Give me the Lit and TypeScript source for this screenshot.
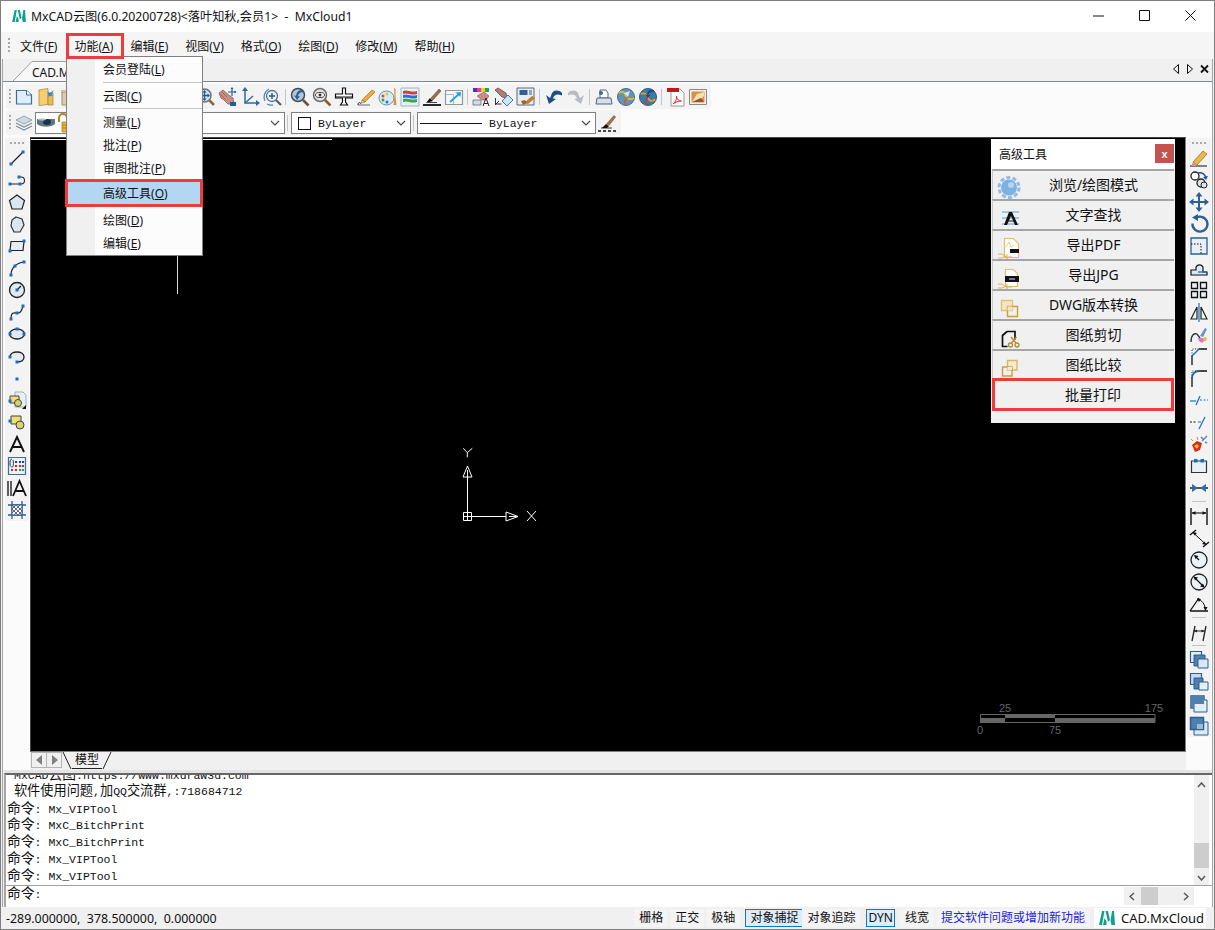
import {LitElement, html, css, svg} from 'lit';
import {customElement} from 'lit/decorators.js';

const BLUE = '#1a6fc4';
const NAVY = '#2d5f94';
const node = (x: number, y: number) => svg`<rect x=${x - 1.5} y=${y - 1.5} width="3" height="3" fill=${BLUE}/>`;

// toolbar icons, all drawn on a 20x20 box (the panel ones on 30x30)
const ICONS: Record<string, unknown> = {
    // top toolbar
    newdoc: svg`<path d="M2.5 3.5h10l5 4.500v9h-15z" fill="#dfeefa" stroke="#3c6f9f" stroke-width="1.200"/><path d="M12.500 3.500v4.500h5" fill="#fff" stroke="#3c6f9f"/>`,
    open: svg`<path d="M3 3l9 -1.500v16l-9 1z" fill="#f3cf73" stroke="#b08a35" stroke-width=".8"/><path d="M12 6h5v12h-5z" fill="#e8bb55" stroke="#b08a35" stroke-width=".8"/><path d="M18 3l-4 3 -2.500 -1.500 1 5 4.500 -1 -1.500 -1z" fill="#2b8ad8"/>`,
    trash: svg`<path d="M4 5h8v13h-8z" fill="#d8cfae" stroke="#9d9468"/><path d="M3 3h11v2h-11z" fill="#cfc497"/>`,
    zoomPan: svg`<circle cx="8.500" cy="8.500" r="6.500" fill="#d8e4ee" stroke="#68747f" stroke-width="1.500"/><path d="M13 13l5 5" stroke="#8a6a45" stroke-width="2.500"/><path d="M8.500 4.500v8M4.500 8.500h8" stroke="#1f5a92" stroke-width="1.300"/><path d="M8.500 3l-2 2.500h4zM8.500 14l-2 -2.500h4zM3 8.500l2.500 -2v4zM14 8.500l-2.500 -2v4z" fill="#1f5a92"/>`,
    hand: svg`<path d="M1 6l4 -3 7 6 3 2 1 6h-6l-4 -4 -3 -2z" fill="#c58f86" stroke="#8e5a55" stroke-width=".8"/><path d="M4 5l5 5M2.500 7.500l5 5" stroke="#8e5a55" stroke-width=".8"/><path d="M14 1v8M10 5h8" stroke="#245f98" stroke-width="1.200"/><path d="M14 0l-1.500 2h3zM18.500 5l-2 -1.500v3z" fill="#245f98"/><path d="M12 15h6v4h-6z" fill="#245f98"/>`,
    axes: svg`<path d="M5 2v14h13" fill="none" stroke="#2a6aa8" stroke-width="1.500"/><path d="M5 16l8 -7" stroke="#2a6aa8" stroke-width="1.300"/><path d="M5 0l-3 4h6zM20 16l-4 -3v6z" fill="#2a6aa8"/>`,
    zoomRound: svg`<circle cx="10" cy="9" r="5.500" fill="#eaf2f8" stroke="#58708a" stroke-width="1.300"/><path d="M10 6v6M7 9h6" stroke="#1f5a92" stroke-width="1.400"/><path d="M14 13l5 5" stroke="#58606a" stroke-width="2.200"/><path d="M3 14a9 9 0 0 1 4 -12" fill="none" stroke="#4c8ac0" stroke-width="1.300"/><path d="M5 17a9 9 0 0 0 6 1" fill="none" stroke="#4c8ac0" stroke-width="1.300"/>`,
    zoomBack: svg`<circle cx="8" cy="8" r="6.500" fill="#b7c6d4" stroke="#3d4e60" stroke-width="1.500"/><path d="M13 13l5.500 5.500" stroke="#75502f" stroke-width="2.500"/><path d="M13 3a6 6 0 0 0 -7 6l-2 -1 3 5 3 -4 -2 .5a4 4 0 0 1 5 -4z" fill="#24609c"/>`,
    zoomEye: svg`<circle cx="8" cy="8" r="6.500" fill="#e2e2e2" stroke="#6d6d6d" stroke-width="1.500"/><ellipse cx="8" cy="8" rx="4.500" ry="2.500" fill="#fff" stroke="#444"/><circle cx="8" cy="8" r="1.500" fill="#333"/><path d="M13 13l5.500 5.500" stroke="#8a5a35" stroke-width="2.500"/>`,
    plane: svg`<path d="M8.500 1h3v6h7v4h-7v4l2 3h-7l2 -3v-4h-7v-4h7z" fill="#fff" stroke="#111" stroke-width="1.200"/><path d="M1 10h18" stroke="#111"/>`,
    pen: svg`<path d="M2 18h12" stroke="#666"/><path d="M2 18c0 -3 2 -3 3 -1" fill="none" stroke="#222"/><path d="M6 13l10 -10 3 2 -10 10z" fill="#eead3b" stroke="#a86f1d" stroke-width=".7"/><path d="M6 13l-1 3 4 -1z" fill="#f8e2b5" stroke="#555" stroke-width=".5"/>`,
    palette: svg`<ellipse cx="8.500" cy="11" rx="7.500" ry="7" fill="#dbe9f2" stroke="#5d93bd"/><circle cx="5" cy="9" r="1.500" fill="#e0483c"/><circle cx="9" cy="7" r="1.500" fill="#f0c030"/><circle cx="5" cy="13" r="1.500" fill="#35a050"/><circle cx="9" cy="15" r="1.500" fill="#3070d0"/><path d="M16 1l1.500 1v7l1 9h-3l1 -9z" fill="#e78a2a"/>`,
    stack: svg`<path d="M1 1h18v18h-18z" fill="#e9f0f5" stroke="#9fb3c2"/><path d="M3 4c4 -2 8 2 14 0v3c-6 2 -10 -2 -14 0z" fill="#d83b3b"/><path d="M3 8c4 -2 8 2 14 0v3c-6 2 -10 -2 -14 0z" fill="#2f6fd0"/><path d="M3 12c4 -2 8 2 14 0v3c-6 2 -10 -2 -14 0z" fill="#38a44c"/>`,
    brush: svg`<path d="M1 18h18" stroke="#111" stroke-width="1.800"/><path d="M4 16l4 -5 3 3z" fill="#111"/><path d="M9 11l8 -9 2 2 -8 9z" fill="#9b7048" stroke="#5e3e20" stroke-width=".5"/><path d="M5 15.500h10" stroke="#444"/>`,
    resize: svg`<path d="M1.500 3.500h17v14h-17z" fill="#f4f7fa" stroke="#8f969c" stroke-width="1.200"/><path d="M1.500 7.500h8v10" fill="none" stroke="#b0b6bb"/><path d="M6 15l9 -8" stroke="#28a0e0" stroke-width="1.800"/><path d="M17 5l-5.500 .5 5 4.500z" fill="#28a0e0"/>`,
    match: svg`<path d="M1 1h16v4h-16z" fill="#e83a9a"/><path d="M1 1h4v4h-4z" fill="#5030c0"/><path d="M9 1h4v4h-4z" fill="#f0d020"/><path d="M13 1h4v4h-4z" fill="#20a050"/><path d="M5 9l7 -4 5 4 -3 4h-4z" fill="#cc8a80" stroke="#8e5a55" stroke-width=".6"/><path d="M1 13h8v5h-8z" fill="#d0dbe4" stroke="#62707e" stroke-width=".8"/><path d="M11 19l3 -8 3 8M12 16.500h4" fill="none" stroke="#222"/>`,
    hand2: svg`<path d="M1 3l3 -2 8 5 1 5 -5 -1z" fill="#a98078" stroke="#6e4a46" stroke-width=".8"/><path d="M8 14l6 -6 5 5 -6 6z" fill="#cfe4f5" stroke="#3a78b0"/><path d="M1.500 11v6h6" fill="none" stroke="#333"/><path d="M1 18l4 -4" stroke="#333"/>`,
    save: svg`<path d="M1 1h17v17h-17z" fill="#e6edf2" stroke="#5c6a75"/><path d="M3.500 3h8v5h-8z" fill="#305f96"/><path d="M13 3h3v5h-3z" fill="#8fa7bc"/><path d="M8 16l8 -7 3 2 -7 6z" fill="#c67a30"/><path d="M5 14l4 -1 2 3 -4 2z" fill="#a85f20"/>`,
    undo: svg`<path d="M18 6c-4 -4 -10 -3 -11 3l-1 2 -4 -3 3 9 7 -5 -3 -.5c1 -4 5 -5 9 -3z" fill="#1c4d84"/>`,
    redo: svg`<path d="M2 6c4 -4 10 -3 11 3l1 2 4 -3 -3 9 -7 -5 3 -.5c-1 -4 -5 -5 -9 -3z" fill="#b9bcbe"/>`,
    print: svg`<path d="M6 3h6l2 3v5h-8z" fill="#fff" stroke="#50647c"/><path d="M3 11h14l1 6h-16z" fill="#d6deea" stroke="#50647c"/><circle cx="7" cy="6" r="2" fill="#50647c"/>`,
    globe1: svg`<circle cx="10" cy="10" r="8.500" fill="#5d94b8" stroke="#4a6a80"/><path d="M3 6c4 -3 6 0 7 3s5 4 8 2" fill="none" stroke="#e8b040" stroke-width="2"/><path d="M10 18c-2 -3 -1 -6 2 -8" fill="none" stroke="#d85a30" stroke-width="1.500"/><path d="M14 4l-6 2 4 4z" fill="#dbe6ee"/>`,
    globe2: svg`<circle cx="10" cy="10" r="8.500" fill="#3d7aa8" stroke="#3a5a70"/><path d="M3 7c4 -2 6 1 7 4s5 4 7 1" fill="none" stroke="#e0a030" stroke-width="1.800"/><path d="M8 18c-1 -3 0 -6 2 -8" fill="none" stroke="#c83a30" stroke-width="1.500"/><path d="M16 3c-4 -1 -7 1 -7 5l-2 -1 2.500 4 3 -3 -2 0c0 -2 2 -3 5 -3z" fill="#1c4d84"/>`,
    pdf: svg`<path d="M5 2h9l4 4v13h-13z" fill="#fff" stroke="#9a9a9a"/><path d="M1 1h12v4h-12z" fill="#c4151c"/><path d="M7 17c3 -2 4 -6 3.500 -8 0 3 2 5 5 5 -3 0 -6 1 -8.500 3z" fill="none" stroke="#e0302a"/>`,
    img: svg`<path d="M1.500 2.500h17v15h-17z" fill="#f5f1e6" stroke="#8a8a8a"/><path d="M3.500 4.500h13v11h-13z" fill="#d89050"/><path d="M4 15l5 -8 7 -2v4l-6 6z" fill="#ece2b5"/><path d="M4 15l9 -4 3 4z" fill="#9e4e25"/>`,
    layers: svg`<path d="M10 3l8 4 -8 4 -8 -4z" fill="#cfdbe4" stroke="#7d8f9c" stroke-width=".8"/><path d="M2 10l8 4 8 -4M2 13l8 4 8 -4" fill="none" stroke="#7d8f9c" stroke-width="1.300"/>`,
    eye: svg`<path d="M1 6h18v5c-3 3 -13 4 -18 0z" fill="#5e7488"/><ellipse cx="11" cy="9" rx="4" ry="3" fill="#1c3348"/><ellipse cx="6" cy="6.500" rx="4" ry="1" fill="#a9c0d2"/>`,
    lock: svg`<path d="M3 9v-4a4 4 0 0 1 8 0v2" fill="none" stroke="#b57f1c" stroke-width="2"/><path d="M6 9h13v10h-13z" fill="#edb23c" stroke="#a87418" stroke-width=".7"/><path d="M6 12h13M6 15h13" stroke="#a87418" stroke-width=".8"/>`,
    weight: svg`<path d="M1 18h3M6 18h3M11 18h3M16 18h3" stroke="#111" stroke-width="1.500"/><path d="M4 15h11" stroke="#333"/><path d="M5 15l4 -4 3 2 -2 2z" fill="#111"/><path d="M9 11l8 -9 2 2 -7 9z" fill="#9b7048"/>`,

    // left toolbar
    line: svg`<path d="M4 16l12 -12" stroke="#222" stroke-width="1.200"/>${node(4, 16)}${node(16, 4)}`,
    polyline: svg`<path d="M3 14h11a3.500 3.500 0 0 0 0 -7h-2" fill="none" stroke="#222" stroke-width="1.100"/>${node(3, 14)}${node(13, 14)}${node(12, 7)}`,
    pentagon: svg`<path d="M10 3l7.500 5.500 -2.500 8.500h-10l-2.500 -8.500z" fill="#dbe6ef" stroke="#222" stroke-width="1.200"/>`,
    hexagon: svg`<path d="M9 3l6 2 2 6 -4 7h-6l-3 -6 1 -6z" fill="#dbe6ef" stroke="#333" stroke-width="1.200"/>`,
    rect: svg`<path d="M4 5.500h13l-1 9h-13z" fill="#e5edf4" stroke="#222" stroke-width="1.200"/>${node(3, 15)}${node(17, 5)}`,
    arc: svg`<path d="M4 17c0 -7 5 -12 13 -13" fill="none" stroke="#222" stroke-width="1.200"/>${node(4, 17)}${node(8, 8)}${node(17, 4)}`,
    circle: svg`<circle cx="10" cy="10" r="7.500" fill="#e2e9ef" stroke="#222" stroke-width="1.300"/><path d="M10 10l4 -4" stroke="#222" stroke-width="1.200"/>${node(10, 10)}`,
    spline: svg`<path d="M4 17c0 -8 4 -6 7 -6s4 -3 5 -7" fill="none" stroke="#222" stroke-width="1.200"/>${node(4, 17)}${node(16, 4)}${node(10, 11)}`,
    ellipse: svg`<ellipse cx="10" cy="10" rx="7.500" ry="5" fill="#dfe8f0" stroke="#222" stroke-width="1.300"/>${node(3, 10)}${node(17, 10)}${node(10, 5)}`,
    earc: svg`<path d="M10 16c5 0 7 -2 7 -5s-3 -5 -7 -5 -7 2 -7 5" fill="#e4eaf0" stroke="#222" stroke-width="1.300"/>${node(3, 11)}${node(10, 16)}`,
    point: svg`${node(10, 11)}`,
    insert: svg`<path d="M8 2h8l3 3v12h-11z" fill="#e8f0f6" stroke="#9bb0c0"/><path d="M3 6h9v7h-9z" fill="#f0e070" stroke="#445"/><circle cx="11" cy="13" r="3.500" fill="#d8d46a" stroke="#445"/><path d="M15 19l4 -4v4z" fill="#111"/>${node(3, 11)}`,
    block: svg`<path d="M4 4h10v8h-10z" fill="#f0e070" stroke="#445"/><circle cx="13" cy="13" r="4" fill="#d8d46a" stroke="#445"/>${node(3, 9)}`,
    textA: svg`<path d="M3 18L10 3l7 15M5.500 13h9" fill="none" stroke="#111" stroke-width="1.900"/>`,
    table: svg`<path d="M1.500 1.500h17v17h-17z" fill="#eef2f6" stroke="#3a6d9d" stroke-width="1.200"/><path d="M8 5h2v2h-2zM12 5h2v2h-2zM15 5h2v2h-2z" fill="#24457a"/><path d="M8 9h2v2h-2zM12 9h2v2h-2zM15 9h2v2h-2z" fill="#d02828"/><path d="M4 13h2v2h-2zM8 13h2v2h-2z" fill="#d02828"/><path d="M12 13h2v2h-2zM15 13h2v2h-2z" fill="#20a050"/><path d="M5 3c-2 0 -2 3 -2 5s1 3 2 3 2 -1 1 -7" fill="none" stroke="#333"/>`,
    mtext: svg`<path d="M1 3v15M4 3v15" stroke="#111" stroke-width="1.300"/><path d="M6 18l6.500 -15 6.500 15M8.500 13h8" fill="none" stroke="#111" stroke-width="1.800"/>`,
    hatch: svg`<path d="M1 5h18M1 15h18M5 1v18M15 1v18" stroke="#2d5f94" stroke-width="1.300"/><path d="M5 5h10v10h-10z" fill="#fff"/><path d="M5 9l4 -4M5 13l8 -8M7 15l8 -8M11 15l4 -4M9 5l6 6M5 5l10 10M5 9l6 6" stroke="#3a4a5a" stroke-width=".8"/><path d="M5 5h10v10h-10z" fill="none" stroke="#2d5f94"/>`,

    // right toolbar
    erase: svg`<path d="M1 18h17" stroke="#333" stroke-width="1.200"/><path d="M4 14l10 -11 4 3 -10 11z" fill="#e8b84a" stroke="#8a6a20" stroke-width=".7"/><path d="M4 14l4 3 -2 1h-4z" fill="#e09090"/>`,
    copy: svg`<circle cx="6" cy="6" r="4" fill="#fff" stroke="#222" stroke-width="1.300"/><circle cx="12" cy="13" r="4" fill="#dbe5ee" stroke="#222" stroke-width="1.300"/><circle cx="15" cy="15" r="3" fill="#dbe5ee" stroke="#222"/><path d="M9 3c4 -1 7 1 8 5" fill="none" stroke="#1f4f88" stroke-width="1.500"/><path d="M19 6l-2 4 -3 -3z" fill="#1f4f88"/>`,
    move: svg`<path d="M10 2v16M2 10h16" stroke="${NAVY}" stroke-width="2"/><path d="M10 0l-3.500 4.500h7zM10 20l-3.500 -4.500h7zM0 10l4.500 -3.500v7zM20 10l-4.500 -3.500v7z" fill="${NAVY}"/>`,
    rotate: svg`<path d="M6 4.500a7.500 7.500 0 1 1 -2.500 5" fill="none" stroke="${NAVY}" stroke-width="2.300"/><path d="M9 0v7l-6 -3.500z" fill="${NAVY}"/>`,
    scale: svg`<path d="M2 2h16v16h-16z" fill="#e8f0f7" stroke="${NAVY}" stroke-width="1.300"/><path d="M2 8h10v10" fill="none" stroke="#111" stroke-dasharray="1.500 1.500"/>`,
    stretch: svg`<path d="M2 17v-5h5v-3a4 4 0 0 1 7 0v5h4v3z" fill="#dce8f2" stroke="#111" stroke-width="1.200"/><path d="M9 14h9" stroke="#1f6fbf" stroke-width="1.300"/>`,
    array: svg`<path d="M2.500 2.500h6v6h-6zM11.500 2.500h6v6h-6zM2.500 11.500h6v6h-6zM11.500 11.500h6v6h-6z" fill="#eaf0f5" stroke="#111" stroke-width="1.300"/>`,
    mirror: svg`<path d="M2 17l6 -12v12zM18 17l-6 -12v12z" fill="#eef3f7" stroke="#222" stroke-width="1.200"/><path d="M10 1v19" stroke="#1f6fbf" stroke-width="1.200"/>`,
    trim: svg`<path d="M2 18c0 -7 3 -9 6 -8l3 4" fill="none" stroke="#333" stroke-width="1.300"/><path d="M11 12l5 -8 2 1 -4 8z" fill="#6a90d0"/><path d="M9 14h5l2 2 -3 3 -3 -2z" fill="#e070d0"/><circle cx="16" cy="15" r="2" fill="#e8c040"/>`,
    chamfer: svg`<path d="M3 19v-9M10 3h8" stroke="#111" stroke-width="1.300"/><path d="M3 10l7 -7" stroke="#1f6fbf" stroke-width="1.500"/><path d="M3 10v-7h7" fill="none" stroke="#222" stroke-dasharray="1 1.500"/>`,
    fillet: svg`<path d="M3 19v-9M10 3h8" stroke="#111" stroke-width="1.300"/><path d="M3 10c0 -4 3 -7 7 -7" fill="none" stroke="#1f6fbf" stroke-width="1.800"/><path d="M3 10v-7h7" fill="none" stroke="#222" stroke-dasharray="1 1.500"/>`,
    brk1: svg`<path d="M1 11h6" stroke="#1f6fbf" stroke-width="1.200"/><path d="M7 15l4 -9" stroke="#1f6fbf" stroke-width="1.300"/><path d="M11 10h8" stroke="#1f6fbf" stroke-dasharray="2 1.500"/>`,
    brk2: svg`<path d="M1 10h7" stroke="#111" stroke-dasharray="2 1.500"/><path d="M9 10h3" stroke="#1f6fbf"/><path d="M10 17l6 -12" stroke="#1f6fbf" stroke-width="1.300"/>`,
    explode: svg`<path d="M3 11l5 -4 5 2 -2 7 -5 2z" fill="#d82a20"/><path d="M5 12l3 -2 2 2 -2 3z" fill="#f0c020"/><path d="M13 7l5 -5M12 3l2 2M16 8l2 1" stroke="#5a88b8" stroke-width="1.500"/><path d="M2 5l2 2M8 3l1 3" stroke="#e88a20"/>`,
    join: svg`<path d="M2.500 5v11.500h15v-11.500h-15z" fill="#eaf0f5" stroke="#333" stroke-width="1.200"/><path d="M5 3h3.500v3.500h-3.500zM11.500 3h3.500v3.500h-3.500z" fill="${BLUE}"/>`,
    merge: svg`<path d="M1 10h18" stroke="#222" stroke-width="1.500"/><path d="M3 6l6 4 -6 4zM17 6l-6 4 6 4z" fill="#2d6da8"/>`,
    dimLin: svg`<path d="M2 2v17M18 2v17" stroke="#111" stroke-width="1.400"/><path d="M3 7h14" stroke="#111" stroke-width="1.100"/><path d="M2.500 7l4 -1.800v3.600zM17.500 7l-4 -1.800v3.600z" fill="#111"/>`,
    dimAli: svg`<path d="M1 7l6 -5M14 19l6 -5" stroke="#111" stroke-width="1.400"/><path d="M4 4.500l13 12" stroke="#111"/><path d="M3.500 4l4.500 1 -2.500 2.500zM17.500 17l-4.500 -1 2.500 -2.500z" fill="#111"/>`,
    dimRad: svg`<circle cx="10" cy="10" r="8" fill="#eef2f5" stroke="#222" stroke-width="1.300"/><path d="M10 10l-4 -4" stroke="#111" stroke-width="1.200"/><path d="M5 5l4.500 1 -3 3z" fill="#111"/>`,
    dimDia: svg`<circle cx="10" cy="10" r="8" fill="#eef2f5" stroke="#222" stroke-width="1.300"/><path d="M5 5l10 10" stroke="#111" stroke-width="1.200"/><path d="M4.500 4.500l4.500 1 -3 3zM15.500 15.500l-4.500 -1 3 -3z" fill="#111"/>`,
    dimAng: svg`<path d="M1 17h18M1 17l9 -13" stroke="#111" stroke-width="1.300"/><path d="M8 5c5 1 8 5 8.500 11" fill="none" stroke="#111"/><path d="M16.500 17l-2 -4h4zM8 4.500l4 .5 -2 3z" fill="#111"/>`,
    dimCon: svg`<path d="M6 4l-3 15M17 4l-3 15" stroke="#222" stroke-width="1.300"/><path d="M4 9h12" stroke="#222"/><path d="M5 9l3 -1.500v3zM15.500 9l-3 -1.500v3z" fill="#222"/>`,
    order1: svg`<path d="M1.500 1.500h11v11h-11z" fill="#e4edf5" stroke="${NAVY}" stroke-width="1.200"/><path d="M5 5h11v11h-11z" fill="#517fae" stroke="${NAVY}"/><path d="M9 9h10v9h-10z" fill="#dbe8f3" stroke="${NAVY}"/>`,
    order2: svg`<path d="M1.500 1.500h11v11h-11z" fill="#c8d8e6" stroke="${NAVY}" stroke-width="1.200"/><path d="M5 6h9v11h-9z" fill="#517fae" stroke="${NAVY}"/><path d="M10 10h9v8h-9z" fill="#e7eff6" stroke="${NAVY}"/>`,
    order3: svg`<path d="M2 2h13v12h-13z" fill="#517fae" stroke="${NAVY}" stroke-width="1.500"/><path d="M5 6h13v12h-13z" fill="#e3edf5" stroke="${NAVY}"/><path d="M2 2h13v8h-10v4h-3z" fill="#517fae"/>`,
    order4: svg`<path d="M5 6h14v13h-14z" fill="#dce8f2" stroke="${NAVY}"/><path d="M1.500 1.500h13v12h-13z" fill="#517fae" stroke="${NAVY}" stroke-width="1.500"/><path d="M8 8h6v5h-6z" fill="#9dbad6"/>`,

    // floating panel
    gear: svg`<circle cx="16" cy="17.500" r="10" fill="none" stroke="#8dbce6" stroke-width="3" stroke-dasharray="4 2.300"/><circle cx="16" cy="17.500" r="8" fill="#7db2e0"/><circle cx="18" cy="15" r="3" fill="#b4d4ef"/>`,
    textFind: svg`<path d="M9 12h17M9 18h17M9 24h17" stroke="#4a9de0" stroke-width="1.100"/><path d="M16 12h3l6 13h-3l-4 -9 -4 9h-3z" fill="#111"/><path d="M13 21h9" stroke="#111"/>`,
    exPdf: svg`<path d="M11.500 8.500h9l5 5v14h-14z" fill="#fff" stroke="#e2bc6c" stroke-width="1.200"/><path d="M13 17l3 -5 2 5 3 -2" fill="none" stroke="#eccb8c"/><path d="M17 19h9v4h-9z" fill="#111"/><path d="M5 24h4l4 3h6M5 28h4l4 -2M14 24v5" fill="none" stroke="#dcb25e"/>`,
    exJpg: svg`<path d="M12.500 9.500h8l4 4v13h-12z" fill="#fff" stroke="#e2bc6c" stroke-width="1.200"/><path d="M12 16h14v6h-14z" fill="#111"/><path d="M16 19h6" stroke="#ddd"/><path d="M5 24h4l4 3h6M5 28h4l4 -2M14 24v5" fill="none" stroke="#dcb25e"/>`,
    dwg: svg`<path d="M8.500 10.500h11v10h-11z" fill="#f5e6bf" stroke="#dfc080" stroke-width="1.400"/><path d="M14.500 16.500h10v10h-10z" fill="none" stroke="#cc9d3c" stroke-width="1.400"/><path d="M14.500 16.500h5v4h-5z" fill="#f5e6bf"/>`,
    cut: svg`<path d="M14 11.500h8v8M14 11.500l-4.500 4v11h5" fill="none" stroke="#111" stroke-width="1.700"/><circle cx="17.500" cy="25" r="2" fill="none" stroke="#b58a2a" stroke-width="1.300"/><circle cx="24" cy="25" r="2" fill="none" stroke="#b58a2a" stroke-width="1.300"/><path d="M18.500 23l5 -6M23 23l-5 -6" stroke="#b58a2a" stroke-width="1.300"/>`,
    cmp: svg`<path d="M14.500 10.500h9.500v9.500h-9.500z" fill="#f6eccf" stroke="#d9b66c" stroke-width="1.400"/><path d="M9.500 17h9.500v9h-9.500z" fill="none" stroke="#cc9d3c" stroke-width="1.400"/><path d="M14.500 17h4.500v3h-4.500z" fill="#f6eccf"/>`,
};

const icon = (name: string, size = 20) =>
    html`<svg class="ico" width=${size} height=${size} viewBox="0 0 ${size} ${size}">${ICONS[name]}</svg>`;

const chevron = html`<svg class="chev" width="10" height="6" viewBox="0 0 10 6"><path d="M1 1l4 4 4 -4" fill="none" stroke="#444" stroke-width="1.100"/></svg>`;

// brand mark, used in the title bar and the status bar
const logo = (w: number, h: number) => html`<svg class="ico" width=${w} height=${h} viewBox="0 0 16 14"><path d="M0 14l3 -14h2.500l-2.500 14zM4 14l1.500 -7 2 3.500v3.500zM6.500 0h2.500l2 9 -2 2zM13 0h2l1 14h-3.500l-1 -4z" fill="#12a08d"/></svg>`;

const TOP_ICONS = ['newdoc', 'open', 'trash', 'gap', 'zoomPan', 'hand', 'axes', 'zoomRound', '|', 'zoomBack', 'zoomEye', 'plane', 'pen', 'palette', 'stack', 'brush', 'resize', '|', 'match', 'hand2', 'save', '|', 'undo', 'redo', '|', 'print', 'globe1', 'globe2', '|', 'pdf', 'img'];
const LEFT_ICONS = ['line', 'polyline', 'pentagon', 'hexagon', 'rect', 'arc', 'circle', 'spline', 'ellipse', 'earc', 'point', 'insert', 'block', 'textA', 'table', 'mtext', 'hatch'];
const RIGHT_ICONS = ['erase', 'copy', 'move', 'rotate', 'scale', 'stretch', 'array', 'mirror', 'trim', 'chamfer', 'fillet', 'brk1', 'brk2', 'explode', 'join', 'merge', '|', 'dimLin', 'dimAli', 'dimRad', 'dimDia', 'dimAng', '|', 'dimCon', '|', 'order1', 'order2', 'order3', 'order4'];

const MENUS = [['文件', 'F'], ['功能', 'A'], ['编辑', 'E'], ['视图', 'V'], ['格式', 'O'], ['绘图', 'D'], ['修改', 'M'], ['帮助', 'H']];

const DROPDOWN: (string[] | null)[] = [
    ['会员登陆', 'L'], null, ['云图', 'C'], null, ['测量', 'L'], ['批注', 'P'], ['审图批注', 'P'],
    ['高级工具', 'O', 'on'], ['绘图', 'D'], ['编辑', 'E'],
];

const TOOLS = [
    ['gear', '浏览/绘图模式'], ['textFind', '文字查找'], ['exPdf', '导出PDF'], ['exJpg', '导出JPG'],
    ['dwg', 'DWG版本转换'], ['cut', '图纸剪切'], ['cmp', '图纸比较'], ['', '批量打印'],
];

const LOG = [
    'MxCAD云图:https://www.mxdraw3d.com',
    ' 软件使用问题,加QQ交流群,:718684712',
    '命令: Mx_VIPTool',
    '命令: MxC_BitchPrint',
    '命令: MxC_BitchPrint',
    '命令: Mx_VIPTool',
    '命令: Mx_VIPTool',
];

// [label, highlighted, left margin]
const STATUS: [string, boolean, number][] = [
    ['栅格', false, 0], ['正交', false, 2], ['极轴', false, 2], ['对象捕捉', true, 5],
    ['对象追踪', false, -1], ['DYN', true, 6], ['线宽', false, 5],
];

// the command line font has narrow latin and wider chinese glyphs
const mixed = (s: string) => s.split(/([\u4e00-\u9fff]+)/).map((p, i) => (i % 2 ? html`<span class="cjk">${p}</span>` : p));

@customElement('app-root')
export class AppRoot extends LitElement {
    static styles = css`
        :host {
            display: block;
            position: relative;
            width: 1215px;
            height: 930px;
            overflow: hidden;
            font-family: "Noto Sans", "Noto Sans CJK SC", sans-serif;
            font-size: 12px;
            color: #111;
            background: #f0f0f0;
        }

        .ico { display: block; flex: none; overflow: visible; }

        .window {
            height: 930px;
            box-sizing: border-box;
            border: 1px solid #7f7f7f;
            display: flex;
            flex-direction: column;
        }

        /* title bar */
        .titlebar {
            height: 31px;
            flex: none;
            box-sizing: border-box;
            background: #fff;
            display: flex;
            align-items: center;
            padding: 0 0 2px 11px;
        }
        .title { margin-left: 5px; white-space: pre; font-size: 12.2px; }
        .winbtns { margin-left: auto; display: flex; align-items: center; gap: 35px; padding-right: 18px; }

        /* menu bar */
        .menubar {
            height: 27px;
            flex: none;
            background: #f5f5f5;
            display: flex;
            align-items: center;
            padding-left: 7px;
            gap: 17px;
        }
        .grip-v { width: 2px; height: 16px; margin-right: -7px; background: repeating-linear-gradient(#a8a8a8 0 2px, transparent 2px 4px); }
        .menubar span { white-space: nowrap; }

        /* MDI frame */
        .frame {
            flex: 1;
            min-height: 0;
            margin: 0 1px 0 1px;
            border-left: 1px solid #a6a6a6;
            border-right: 1px solid #a6a6a6;
            display: flex;
            flex-direction: column;
        }
        .tabstrip {
            height: 22px;
            flex: none;
            margin-top: 1px;
            box-sizing: border-box;
            background: #f0f0f0;
            border-bottom: 1px solid #7f8890;
            display: flex;
            align-items: flex-end;
            padding-left: 9px;
        }
        .doctab {
            border-top: 1px solid #a0a0a0;
            padding: 3px 40px 1px 0;
            line-height: 15px;
            background: #f8f8f8;
        }
        .tabnav { margin-left: auto; display: flex; align-items: center; gap: 6px; padding: 0 3px 7px 0; }

        .toolbars {
            height: 55px;
            flex: none;
            background: #fbfbfb;
            padding: 2px 0 0 3px;
            box-sizing: border-box;
            display: flex;
            flex-direction: column;
            gap: 1px;
        }
        .toolbar {
            height: 25px;
            background: #f3f3f3;
            border-radius: 3px;
            align-self: flex-start;
            display: flex;
            align-items: center;
        }
        .toolbar.top { width: 705px; }
        .toolbar.second { width: 615px; }
        .grip-h { width: 7px; height: 16px; flex: none; }
        .grip-h::before {
            content: '';
            display: block;
            width: 2px;
            height: 16px;
            margin-left: 3px;
            background: repeating-linear-gradient(#a8a8a8 0 2px, transparent 2px 4px);
        }
        .slot { width: 22px; height: 22px; flex: none; display: flex; align-items: center; justify-content: center; }
        .sep { width: 1px; height: 16px; background: #c4c4c4; flex: none; margin: 0 3px 0 2px; }
        .gap { width: 116px; flex: none; }

        .combo {
            height: 22px;
            box-sizing: border-box;
            border: 1px solid #808080;
            background: #fff;
            display: flex;
            align-items: center;
            flex: none;
            font-family: "Liberation Mono", monospace;
            font-size: 11.5px;
            padding: 1px 0 0 2px;
        }
        .combo.layer { width: 250px; padding-left: 0; }
        .combo.color { width: 120px; padding-left: 6px; }
        .combo.ltype { width: 179px; }
        .chev { margin-left: auto; margin-right: 4px; flex: none; }
        .swatch { width: 11px; height: 11px; border: 1px solid #111; margin-right: 7px; flex: none; }
        .rule { width: 62px; height: 1px; background: #111; margin-right: 7px; flex: none; }

        /* middle: drawing area with the two vertical toolbars */
        .workspace {
            flex: 1;
            min-height: 0;
            display: flex;
            background: #fbfbfb;
        }
        .vbar {
            width: 24px;
            flex: none;
            align-self: flex-start;
            background: #f3f3f3;
            border-radius: 3px;
            margin-top: 1px;
            display: flex;
            flex-direction: column;
            align-items: center;
        }
        .vbar.left { margin-left: 2px; margin-right: 1px; }
        .vbar.right { margin-left: 1px; margin-right: 1px; }
        .grip-top {
            width: 14px;
            height: 2px;
            margin: 4px 0 3px;
            background: repeating-linear-gradient(90deg, #a8a8a8 0 2px, transparent 2px 4px);
        }
        .vsep { width: 14px; height: 1px; background: #c4c4c4; margin: 2px 0 3px; flex: none; }

        .center { flex: 1; min-width: 0; display: flex; flex-direction: column; }
        .canvas {
            flex: 1;
            position: relative;
            background: #000;
            border: 1px solid #444;
            border-right-color: #808080;
            border-bottom-color: #808080;
        }
        .cross-h { position: absolute; left: 0; top: 1px; width: 301px; height: 1px; background: #fff; }
        .cross-v { position: absolute; left: 146px; top: 1px; width: 1px; height: 155px; background: #d8d8d8; }
        .ucs { position: absolute; left: 409px; top: 302px; }
        .scalebar { position: absolute; left: 943px; top: 562px; }

        /* floating tool panel */
        .panel {
            position: absolute;
            left: 960px;
            top: 1px;
            width: 184px;
            height: 284px;
            background: #f0f0f0;
        }
        .panel-head {
            height: 30px;
            box-sizing: border-box;
            background: #fff;
            display: flex;
            align-items: center;
            justify-content: space-between;
            padding: 0 1px 1px 8px;
        }
        .close {
            width: 19px;
            height: 19px;
            background: #c4524f;
            color: #fff;
            font: bold 11px "Liberation Sans", sans-serif;
            display: flex;
            align-items: center;
            justify-content: center;
        }
        .tool {
            height: 30px;
            box-sizing: border-box;
            margin: 0 1px;
            border-top: 2px solid #a5a5a5;
            border-left: 1px solid #c8c8c8;
            display: flex;
            align-items: center;
            font-size: 14px;
        }
        .tool .ico { margin-right: -10px; }
        .tool .label { flex: 1; text-align: center; padding-bottom: 2px; }
        .tool .no-ico { width: 20px; flex: none; }
        .tool.marked { height: 33px; margin-top: -1px; border: 3px solid #f23a3a; }

        /* layout tabs under the drawing */
        .layouttabs {
            height: 18px;
            flex: none;
            background: #f0f0f0;
            display: flex;
            align-items: flex-start;
            padding-left: 1px;
        }
        .navbtn {
            width: 15px;
            height: 16px;
            border: 1px solid #b4b4b4;
            border-left-width: 0;
            box-sizing: border-box;
            display: flex;
            align-items: center;
            justify-content: center;
        }
        .navbtn:first-child { border-left-width: 1px; width: 16px; }
        .modeltab { display: flex; align-items: flex-start; }
        .modeltab span { line-height: 16px; border-bottom: 1px solid #222; padding: 0 3px; }

        /* command window */
        .command {
            height: 132px;
            flex: none;
            margin: 3px 0 0 1px;
            border-top: 2px solid #666;
            border-left: 2px solid #a6a6a6;
            background: #fff;
            box-shadow: 0 -3px 0 #e4e4e4;
            display: flex;
            flex-direction: column;
            font-family: "Liberation Mono", "Noto Sans CJK SC", monospace;
            font-size: 11.5px;
        }
        .cjk { font-size: 13.8px; font-family: "Noto Sans CJK SC", sans-serif; }
        .logrow { height: 110px; flex: none; display: flex; }
        .log { flex: 1; overflow: hidden; padding-left: 1px; }
        .logline { height: 16.8px; line-height: 16.8px; white-space: pre; }
        .logline:first-child { margin-top: -10px; padding-left: 7px; }
        .logline:nth-child(2) .cjk { font-size: 13.2px; }
        .vscroll {
            width: 15px;
            margin-right: 3px;
            background: #f0f0f0;
            display: flex;
            flex-direction: column;
            align-items: center;
            padding: 7px 0 4px;
            box-sizing: border-box;
        }
        .thumb { width: 100%; height: 25px; background: #cdcdcd; margin: auto 0 7px; }
        .inputrow { height: 21px; flex: none; border-top: 1px solid #a0a0a0; display: flex; }
        .prompt { flex: 1; line-height: 12px; padding-left: 1px; }
        .hscroll {
            width: 70px;
            height: 18px;
            margin: 1px 18px 0 0;
            background: #f0f0f0;
            display: flex;
            align-items: center;
            padding: 0 5px;
            box-sizing: border-box;
        }
        .hthumb { width: 17px; height: 18px; background: #cdcdcd; margin: 0 auto 0 6px; }

        /* status bar */
        .status {
            height: 22px;
            flex: none;
            display: flex;
            align-items: center;
            padding-left: 5px;
            background: #f0f0f0;
            white-space: pre;
        }
        .st {
            height: 18px;
            line-height: 16px;
            box-sizing: border-box;
            border: 1px solid transparent;
            padding: 0 4px;
            background: #f4f4f4;
        }
        .st.on { background: #dcecf8; border-color: #0a78d0; }
        .st.tight { padding: 0 1px; }
        .st.link { color: #2222e6; margin-left: 2px; }
        .coords { margin-right: auto; font-size: 12.4px; }
        .brand {
            height: 20px;
            width: 112px;
            margin: 0 8px 0 4px;
            background: #fff;
            display: flex;
            align-items: center;
            gap: 6px;
            padding-left: 5px;
            box-sizing: border-box;
            font-size: 13px;
        }

        /* dropdown and the red call-outs lying over the page */
        .dropdown {
            position: absolute;
            left: 66px;
            top: 56px;
            width: 137px;
            height: 200px;
            box-sizing: border-box;
            border: 1px solid #808080;
            padding-top: 1px;
            background: linear-gradient(90deg, #f0f0f0 0 28px, #fcfcfc 28px);
        }
        .dd-item { height: 23px; line-height: 25px; padding-left: 36px; }
        .dd-item:first-child { line-height: 24px; }
        .dd-item.on {
            height: 26px;
            line-height: 25px;
            margin: 1px 0 2px;
            padding-left: 35px;
            box-sizing: border-box;
            background: #b3d7f3;
            border: 1px solid #0078d7;
        }
        .dd-sep { height: 1px; background: #c4c4c4; margin: 1px 0 1px 36px; }
        .mark { position: absolute; box-sizing: border-box; border: 3px solid #f23a3a; }
        .mark.menu { left: 66px; top: 33px; width: 58px; height: 26px; }
        .mark.item { left: 65px; top: 179px; width: 138px; height: 28px; }
    `;

    private _strip(names: string[]) {
        return names.map((n) => {
            if (n === '|') return html`<div class="sep"></div>`;
            if (n === 'gap') return html`<div class="gap"></div>`;
            return html`<div class="slot">${icon(n)}</div>`;
        });
    }

    private _vstrip(names: string[]) {
        return names.map((n) => (n === '|' ? html`<div class="vsep"></div>` : html`<div class="slot">${icon(n)}</div>`));
    }

    render() {
        return html`
            <div class="window">
                <div class="titlebar">
                    ${logo(14, 12)}
                    <span class="title">MxCAD云图(6.0.20200728)&lt;落叶知秋,会员1&gt;  -  MxCloud1</span>
                    <div class="winbtns">
                        <svg width="11" height="11" viewBox="0 0 11 11"><path d="M0 6h11" stroke="#111"/></svg>
                        <svg width="11" height="11" viewBox="0 0 11 11"><path d="M.5 .5h10v10h-10z" fill="none" stroke="#111"/></svg>
                        <svg width="11" height="11" viewBox="0 0 11 11"><path d="M.5 .5l10 10M10.500 .5l-10 10" stroke="#111"/></svg>
                    </div>
                </div>

                <div class="menubar">
                    <div class="grip-v"></div>
                    ${MENUS.map(([t, k]) => html`<span>${t}(<u>${k}</u>)</span>`)}
                </div>

                <div class="frame">
                    <div class="tabstrip">
                        <svg width="20" height="20" viewBox="0 0 20 20"><path d="M1 20L20 .5V20z" fill="#f8f8f8"/><path d="M1 20L20 .5" stroke="#a0a0a0" fill="none"/></svg>
                        <div class="doctab">CAD.MxCloud</div>
                        <div class="tabnav">
                            <svg width="8" height="10" viewBox="0 0 8 10"><path d="M6.500 .5v9l-5 -4.500z" fill="none" stroke="#111"/></svg>
                            <svg width="8" height="10" viewBox="0 0 8 10"><path d="M1.500 .5v9l5 -4.500z" fill="none" stroke="#111"/></svg>
                            <svg width="9" height="10" viewBox="0 0 9 10"><path d="M1 1.500l7 7M8 1.500l-7 7" stroke="#111" stroke-width="1.800"/></svg>
                        </div>
                    </div>

                    <div class="toolbars">
                        <div class="toolbar top"><div class="grip-h"></div>${this._strip(TOP_ICONS)}</div>
                        <div class="toolbar second">
                            <div class="grip-h"></div>
                            <div class="slot">${icon('layers')}</div>
                            <div class="combo layer">
                                ${icon('eye')}${icon('lock')}${chevron}
                            </div>
                            <div class="sep"></div>
                            <div class="combo color"><div class="swatch"></div>ByLayer${chevron}</div>
                            <div class="sep"></div>
                            <div class="combo ltype"><div class="rule"></div>ByLayer${chevron}</div>
                            <div class="slot">${icon('weight')}</div>
                        </div>
                    </div>

                    <div class="workspace">
                        <div class="vbar left"><div class="grip-top"></div>${this._vstrip(LEFT_ICONS)}</div>
                        <div class="center">
                            <div class="canvas">
                                <div class="cross-h"></div>
                                <div class="cross-v"></div>
                                <svg class="ucs" width="100" height="90" viewBox="0 0 100 90" fill="none" stroke="#fff">
                                    <path d="M23.300 8.300l4 4.400 5 -4.400M27.300 12.700v4.600"/>
                                    <path d="M27.500 26l-4.500 11h9zM27.500 30v7"/>
                                    <path d="M27.500 37v35M31.500 76.500H66"/>
                                    <path d="M23.500 72.500h8v8h-8zM27.500 72.500v8M23.500 76.500h8"/>
                                    <path d="M66 72v9l12 -4.500zM69 76.500h9"/>
                                    <path d="M87 71l9 10M96 71l-9 10"/>
                                </svg>
                                <svg class="scalebar" width="200" height="40" viewBox="0 0 200 40">
                                    <g font-family="Liberation Sans" font-size="11" fill="#666" text-anchor="middle">
                                        <text x="31" y="12">25</text><text x="180" y="12">175</text>
                                        <text x="6" y="34">0</text><text x="81" y="34">75</text>
                                    </g>
                                    <path d="M6.500 14.500h174.500v8H6.500z" fill="none" stroke="#666"/>
                                    <path d="M31 14h50v4H31zM6 18h25v5H6zM81 18h100v5H81z" fill="#666"/>
                                </svg>
                                <div class="panel">
                                    <div class="panel-head"><span>高级工具</span><div class="close">x</div></div>
                                    ${TOOLS.map(([ic, label]) => ic
                                        ? html`<div class="tool">${icon(ic, 30)}<span class="label">${label}</span></div>`
                                        : html`<div class="tool marked"><div class="no-ico"></div><span class="label">${label}</span></div>`)}
                                </div>
                            </div>
                            <div class="layouttabs">
                                <div class="navbtn"><svg width="7" height="10" viewBox="0 0 7 10"><path d="M6 0v10L0 5z" fill="#808080"/></svg></div>
                                <div class="navbtn"><svg width="7" height="10" viewBox="0 0 7 10"><path d="M1 0v10l6 -5z" fill="#808080"/></svg></div>
                                <div class="modeltab">
                                    <svg width="10" height="18" viewBox="0 0 10 18"><path d="M1 0l8 17" stroke="#222" fill="none"/></svg>
                                    <span>模型</span>
                                    <svg width="10" height="18" viewBox="0 0 10 18"><path d="M9 0L1 17" stroke="#222" fill="none"/></svg>
                                </div>
                            </div>
                        </div>
                        <div class="vbar right"><div class="grip-top"></div>${this._vstrip(RIGHT_ICONS)}</div>
                    </div>

                    <div class="command">
                        <div class="logrow">
                            <div class="log">${LOG.map((l) => html`<div class="logline">${mixed(l)}</div>`)}</div>
                            <div class="vscroll">
                                <svg width="9" height="6" viewBox="0 0 9 6"><path d="M1 5l3.500 -4 3.500 4" fill="none" stroke="#555" stroke-width="1.500"/></svg>
                                <div class="thumb"></div>
                                <svg width="9" height="6" viewBox="0 0 9 6"><path d="M1 1l3.500 4 3.500 -4" fill="none" stroke="#555" stroke-width="1.500"/></svg>
                            </div>
                        </div>
                        <div class="inputrow">
                            <div class="prompt">${mixed('命令:')}</div>
                            <div class="hscroll">
                                <svg width="6" height="9" viewBox="0 0 6 9"><path d="M5 1L1 4.500 5 8" fill="none" stroke="#555" stroke-width="1.500"/></svg>
                                <div class="hthumb"></div>
                                <svg width="6" height="9" viewBox="0 0 6 9"><path d="M1 1l4 3.500L1 8" fill="none" stroke="#555" stroke-width="1.500"/></svg>
                            </div>
                        </div>
                    </div>
                </div>

                <div class="status">
                    <span class="coords">-289.000000,  378.500000,  0.000000</span>
                    ${STATUS.map(([t, on, ml]) => html`<span class="st ${on ? 'on' : ''} ${t === 'DYN' ? 'tight' : ''}" style="margin-left:${ml}px">${t}</span>`)}
                    <span class="st link">提交软件问题或增加新功能</span>
                    <div class="brand">${logo(16, 14)}<span>CAD.MxCloud</span></div>
                </div>
            </div>

            <div class="dropdown">
                ${DROPDOWN.map((d) => d
                    ? html`<div class="dd-item ${d[2] ? 'on' : ''}">${d[0]}(<u>${d[1]}</u>)</div>`
                    : html`<div class="dd-sep"></div>`)}
            </div>
            <div class="mark menu"></div>
            <div class="mark item"></div>
        `;
    }
}
